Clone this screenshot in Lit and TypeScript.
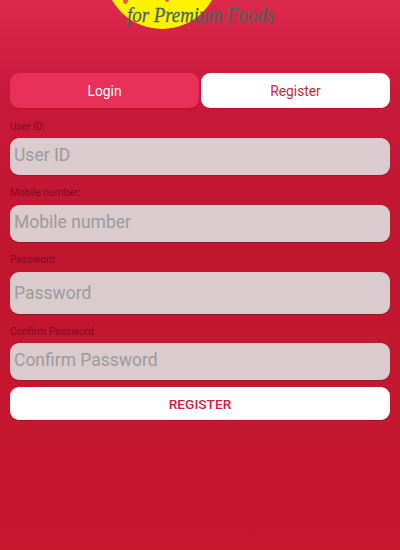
import { LitElement, html, css } from "lit";
import { customElement } from "lit/decorators.js";

@customElement("app-root")
export class AppRoot extends LitElement {
  static styles = css`
    :host { display: block; width: 400px; height: 550px; overflow: hidden; font-family: Roboto, "Liberation Sans", sans-serif; background: linear-gradient(180deg, #dc2a4c 0px, #c9193a 90px, #c11630 250px, #c8172f 550px); }
    .logo { display: block; height: 73px; width: 400px; }
    .tag { font-family: "Liberation Serif", serif; font-style: italic; font-size: 22px; fill: #4a665a; stroke: #4a665a; stroke-width: 0.3px; }
    .form { display: flex; flex-direction: column; padding: 0 10px; }
    .tabs { display: flex; gap: 2px; height: 35px; }
    .tab { flex: 1; border-radius: 9px; display: flex; align-items: center; justify-content: center; font-size: 13.8px; box-shadow: 0 1px 1px rgba(100,0,20,.25); }
    .tab.off { background: #e83058; color: #fff; }
    .tab.on { background: #fff; color: #d01f3f; }
    .label { font-size: 10.2px; line-height: 12px; color: #7f0d20; margin-top: 12px; margin-bottom: 6px; height: 12px; }
    .label.first { margin-top: 13px; margin-bottom: 5px; }
    .label.tight { margin-bottom: 5px; }
    .input { height: 37px; background: #d9cbce; border-radius: 9px; display: flex; align-items: center; padding-left: 4px; padding-bottom: 3px; box-sizing: border-box; font-size: 17.5px; color: #9b9b9b; box-shadow: 0 1px 1px rgba(100,0,20,.3); }
    .pw { height: 42px; padding-bottom: 0; }
    .btn { margin-top: 7px; height: 33px; background: #fff; border-radius: 9px; color: #d01f3f; font-size: 13.7px; font-weight: 500; display: flex; align-items: center; justify-content: center; box-shadow: 0 1px 1px rgba(100,0,20,.3); }
  `;

  render() {
    return html`
      <svg class="logo" viewBox="0 0 400 73" aria-hidden="true">
        <circle cx="162" cy="-28.6" r="57.6" fill="#fff200"></circle>
        <path d="M123 0c0 2 1 4 2 4 2 0 3-2 3-4zM165 0c0 1 1 2 2 2 1 0 2-1 2-2z" fill="#e8534f"></path>
        <text class="tag" x="127" y="22" textLength="147" lengthAdjust="spacingAndGlyphs">for Premium Foods</text>
      </svg>
      <div class="form">
        <div class="tabs"><div class="tab off">Login</div><div class="tab on">Register</div></div>
        <div class="label first">User ID:</div>
        <div class="input">User ID</div>
        <div class="label">Mobile number:</div>
        <div class="input">Mobile number</div>
        <div class="label">Password</div>
        <div class="input pw">Password</div>
        <div class="label tight">Confirm Password</div>
        <div class="input">Confirm Password</div>
        <div class="btn">REGISTER</div>
      </div>
    `;
  }
}
